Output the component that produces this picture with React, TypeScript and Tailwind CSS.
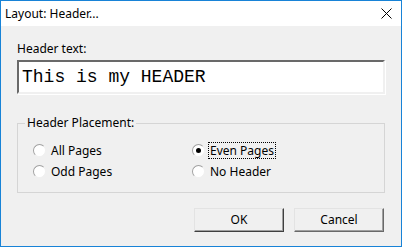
import React from 'react';

const ui = "font-['Segoe_UI','Noto_Sans',sans-serif] text-[12px] text-black";

function Radio({ label, checked, focused }: { label: string; checked?: boolean; focused?: boolean }) {
  return (
    <div className="flex h-[21px] items-center">
      <span className="relative flex h-[13px] w-[13px] items-center justify-center rounded-full border border-[#a0a0a0] border-b-[#f0f0f0] border-r-[#f0f0f0] bg-white">
        {checked && <span className="h-[5px] w-[5px] rounded-full bg-black" />}
      </span>
      <span
        className={
          'ml-[3px] px-[1px] leading-[15px] ' +
          (focused ? 'border border-dotted border-black' : 'border border-transparent')
        }
      >
        {label}
      </span>
    </div>
  );
}

function Button({ children, primary }: { children: React.ReactNode; primary?: boolean }) {
  return (
    <button
      className={
        'h-[24px] w-[90px] border bg-[#f0f0f0] ' +
        (primary
          ? 'border-[#e3e3e3] border-b-[#404040] border-r-[#404040] shadow-[inset_-1px_-1px_0_#a0a0a0]'
          : 'border-[#e3e3e3] border-b-[#696969] border-r-[#696969] shadow-[inset_-1px_-1px_0_#a0a0a0]')
      }
    >
      {children}
    </button>
  );
}

export default function App() {
  return (
    <div className={'flex h-[247px] w-[402px] flex-col border border-[#1883d7] bg-[#f0f0f0] ' + ui}>
      <div className="flex h-[25px] items-center justify-between bg-white pl-[4px] pr-[8px]">
        <span>Layout: Header...</span>
        <svg width="11" height="11" viewBox="0 0 11 11" className="mr-[1px]">
          <path d="M0.5 0.5 L10.5 10.5 M10.5 0.5 L0.5 10.5" stroke="#000" strokeWidth="1" />
        </svg>
      </div>
      <div className="flex flex-1 flex-col px-[16px]">
        <div className="mt-[15px] leading-[15px]">Header text:</div>
        <div className="mt-[4px] flex h-[34px] items-center border-2 border-[#a0a0a0] border-t-[#696969] border-l-[#696969] border-b-[#f0f0f0] border-r-[#f0f0f0] bg-white pl-[3px] shadow-[1px_1px_0_#fff]">
          <span className="font-['Courier_New','Liberation_Mono',monospace] text-[18px] text-black">This is my HEADER</span>
        </div>
        <fieldset className="mt-[22px] h-[77px] border border-[#d5d5d5] px-[15px] pt-[10px]">
          <legend className="ml-[-8px] px-[2px] leading-[14px]">Header Placement:</legend>
          <div className="grid grid-cols-[159px_1fr]">
            <Radio label="All Pages" />
            <Radio label="Even Pages" checked focused />
            <Radio label="Odd Pages" />
            <Radio label="No Header" />
          </div>
        </fieldset>
        <div className="mt-[15px] flex justify-end gap-[10px] pr-[1px]">
          <Button primary>OK</Button>
          <Button>Cancel</Button>
        </div>
      </div>
    </div>
  );
}
